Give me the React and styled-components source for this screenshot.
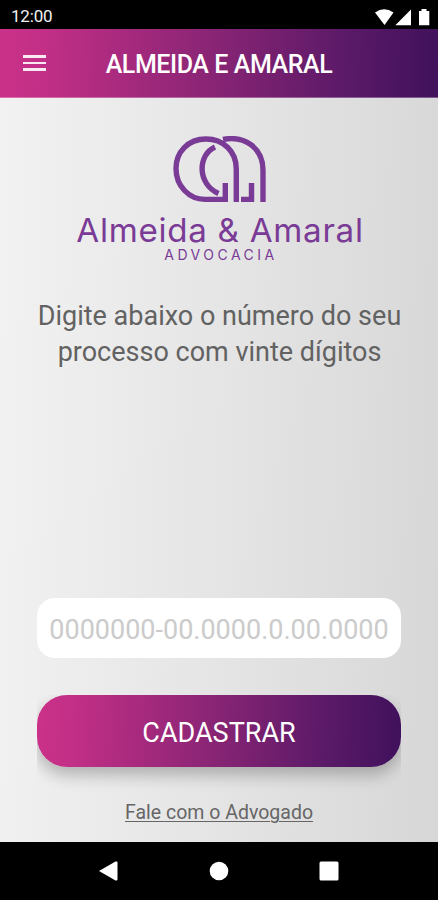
import React from "react";
import styled, { createGlobalStyle } from "styled-components";

const GlobalStyle = createGlobalStyle`
  * { box-sizing: border-box; }
  body { margin: 0; font-family: Roboto, "Noto Sans", sans-serif; }
`;

const brandGradient = "linear-gradient(92deg, #cb3189 0%, #c22f86 10%, #872474 50%, #5c1a68 78%, #40115c 100%)";

const Screen = styled.div`
  width: 438px;
  height: 900px;
  display: flex;
  flex-direction: column;
  overflow: hidden;
  background: #000;
`;

const StatusBar = styled.div`
  height: 29px;
  flex: none;
  display: flex;
  align-items: center;
  justify-content: space-between;
  padding: 3px 0 0 11px;
  color: #f2f2f2;
`;

const Clock = styled.span`
  font-size: 17px;
  line-height: 20px;
  letter-spacing: -0.2px;
`;

const StatusIcons = styled.svg`
  width: 66px;
  height: 26px;
  margin-top: -3px;
  fill: #fff;
`;

const AppBar = styled.header`
  height: 69px;
  flex: none;
  display: grid;
  grid-template-columns: 69px 1fr 69px;
  align-items: center;
  background: ${brandGradient};
  border-bottom: 1px solid rgba(255, 255, 255, 0.3);
`;

const MenuButton = styled.button`
  display: flex;
  flex-direction: column;
  gap: 4px;
  width: 23px;
  margin-left: 23px;
  padding: 0;
  border: 0;
  background: none;
`;

const MenuLine = styled.span`
  height: 2.7px;
  background: #f8e9f3;
`;

const Title = styled.h1`
  margin: 2px 0 0;
  text-align: center;
  color: #fff;
  font-size: 25px;
  font-weight: 500;
  letter-spacing: -0.42px;
  white-space: nowrap;
`;

const Content = styled.main`
  flex: 1;
  display: flex;
  flex-direction: column;
  align-items: center;
  padding: 38px 37px 0;
  background: linear-gradient(92deg, #f2f2f2 0%, #e5e5e5 50%, #d7d7d7 100%);
`;

const Brand = styled.div`
  display: flex;
  flex-direction: column;
  align-items: center;
  color: #7a3b96;
`;

const Mark = styled.svg`
  width: 96px;
  height: 68px;
  margin-left: 1px;
  fill: none;
  stroke: #7a3b96;
  stroke-width: 5.4;
`;

const BrandName = styled.div`
  font-family: Inter, sans-serif;
  font-size: 33.2px;
  line-height: 34px;
  letter-spacing: 0.7px;
  margin: 9px -2px 0 0;
  white-space: nowrap;
`;

const BrandSub = styled.div`
  font-family: Inter, sans-serif;
  font-size: 14px;
  line-height: 14px;
  letter-spacing: 3.5px;
  margin: 1px -4px 0 0;
`;

const Prompt = styled.p`
  margin: 36px 0 0 1px;
  text-align: center;
  color: #626262;
  font-size: 27px;
  line-height: 36px;
  white-space: nowrap;
`;

const CaseInput = styled.input`
  width: 364px;
  height: 60px;
  margin-top: 228px;
  padding: 3px 0 0;
  border: 0;
  outline: 0;
  border-radius: 18px;
  background: #fff;
  text-align: center;
  font-family: Roboto, sans-serif;
  font-size: 27px;
  &::placeholder { color: #cbcbcb; opacity: 1; }
`;

const ButtonShade = styled.div`
  height: 113px;
  margin-top: 37px;
  overflow: hidden;
`;

const SubmitButton = styled.button`
  display: block;
  width: 364px;
  height: 72px;
  padding: 3px 0 0;
  border: 0;
  border-radius: 30px;
  background: ${brandGradient};
  box-shadow: 0 8px 16px rgba(0, 0, 0, 0.25);
  color: #fff;
  font-family: Roboto, sans-serif;
  font-size: 27px;
`;

const ContactLink = styled.a`
  margin-top: -8px;
  color: #666;
  font-size: 19.5px;
  line-height: 25px;
  text-decoration: underline;
  text-decoration-thickness: 1px;
  text-underline-offset: 2px;
  white-space: nowrap;
`;

const NavBar = styled.nav`
  height: 58px;
  flex: none;
  display: grid;
  grid-template-columns: repeat(3, 110px);
  justify-content: center;
  align-items: center;
  justify-items: center;
`;

const NavIcon = styled.svg`
  display: block;
  width: 20px;
  height: 20px;
  fill: #fff;
`;

export default function App() {
  return (
    <Screen>
      <GlobalStyle />
      <StatusBar>
        <Clock>12:00</Clock>
        <StatusIcons viewBox="372 0 66 26">
          <path d="M375 10.5Q384 4 393.5 10.5L384.5 23Z" />
          <path d="M411 7.5V23.2H395.3Z" />
          <path d="M419 9h2.5V7h5v2h2.8v14.2H419Z" />
        </StatusIcons>
      </StatusBar>
      <AppBar>
        <MenuButton aria-label="Menu">
          <MenuLine />
          <MenuLine />
          <MenuLine />
        </MenuButton>
        <Title>ALMEIDA E AMARAL</Title>
      </AppBar>
      <Content>
        <Brand>
          <Mark viewBox="172 136 96 68">
            <path d="M236.3 202V169C236.3 151 223 139 206 139C188 139 176 152 176 168.5C176 186 189 199.400 205 199.400H225.300V183" />
            <path d="M215 147C197.500 155 197 184 218.500 193.500" />
            <path d="M223 139.500C246 135 263 149 263 170V202" />
            <path d="M241 199.400H251.500V183" />
          </Mark>
          <BrandName>Almeida &amp; Amaral</BrandName>
          <BrandSub>ADVOCACIA</BrandSub>
        </Brand>
        <Prompt>
          Digite abaixo o número do seu
          <br />
          processo com vinte dígitos
        </Prompt>
        <CaseInput placeholder="0000000-00.0000.0.00.0000" />
        <ButtonShade>
          <SubmitButton>CADASTRAR</SubmitButton>
        </ButtonShade>
        <ContactLink>Fale com o Advogado</ContactLink>
      </Content>
      <NavBar>
        <NavIcon viewBox="0 0 20 20"><path d="M0 10L16.500 .6Q18.500 0 18.500 1.500V18.500Q18.500 20 16.500 19.400Z" /></NavIcon>
        <NavIcon viewBox="0 0 20 20"><circle cx="10" cy="10" r="9.300" /></NavIcon>
        <NavIcon viewBox="0 0 20 20"><rect x=".5" y=".5" width="19" height="19" rx="1.500" /></NavIcon>
      </NavBar>
    </Screen>
  );
}
